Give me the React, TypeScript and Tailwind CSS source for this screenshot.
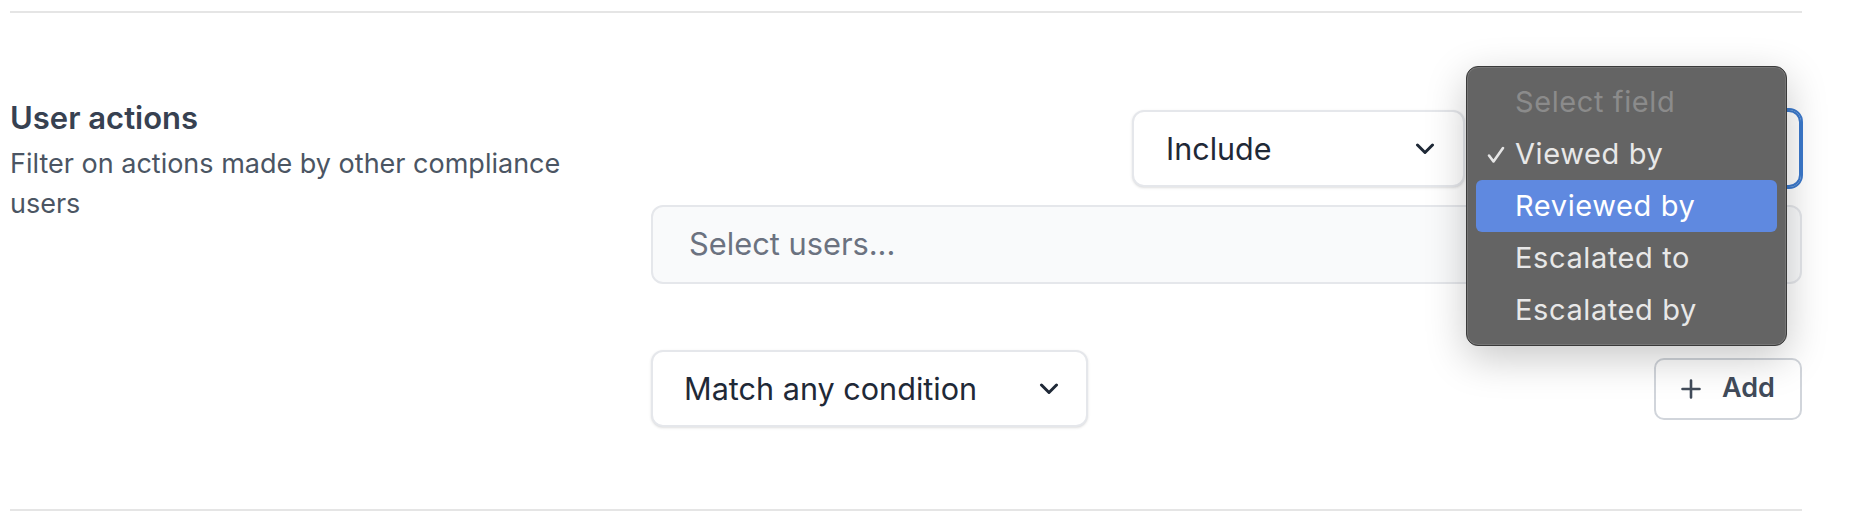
import React from 'react';

function Chevron() {
    return (
        <svg width="20" height="12" viewBox="0 0 20 12" fill="none" className="shrink-0">
            <polyline points="2.5,2 10,9.5 17.5,2" stroke="#1f2937" strokeWidth="3" strokeLinecap="round" strokeLinejoin="round" />
        </svg>
    );
}

function Check() {
    return (
        <svg width="18" height="18" viewBox="0 0 18 18" fill="none">
            <polyline points="2,9.5 6.5,15.5 16,2" stroke="#e6e6e6" strokeWidth="2.6" strokeLinecap="round" strokeLinejoin="round" />
        </svg>
    );
}

const fields = [
    { label: 'Select field', disabled: true },
    { label: 'Viewed by', checked: true },
    { label: 'Reviewed by', active: true },
    { label: 'Escalated to' },
    { label: 'Escalated by' },
];

function FieldMenu() {
    return (
        <div className="absolute left-[-11px] top-[-44px] z-10 w-[321px] rounded-[12px] border border-[#3a3a3a] bg-[#646464] p-[9px] shadow-[inset_0_0_0_1px_rgba(255,255,255,0.12),0_12px_40px_rgba(0,0,0,0.22)]">
            {fields.map((f) => (
                <div
                    key={f.label}
                    className={`relative flex h-[52px] items-center rounded-[6px] pl-[39px] text-[29px] tracking-[0.6px] ${
                        f.active ? 'bg-[#5f89e0] text-white' : f.disabled ? 'text-[#8b8b8b]' : 'text-[#e8e8e8]'
                    }`}
                >
                    {f.checked && (
                        <span className="absolute left-[11px] top-[18px]">
                            <Check />
                        </span>
                    )}
                    {f.label}
                </div>
            ))}
        </div>
    );
}

export default function App() {
    return (
        <div className="min-h-[516px] bg-white font-['Inter',sans-serif]">
            <div className="ml-[10px] w-[1792px] pt-[11px]">
                <div className="flex border-y-2 border-[#e5e5e5] pt-[85px] pb-[82px]">
                    <div className="w-[590px] shrink-0">
                        <h3 className="text-[31px] leading-[40px] font-semibold text-[#374151]">User actions</h3>
                        <p className="mt-[6px] text-[27px] leading-[40px] text-[#4b5563]">
                            Filter on actions made by other compliance users
                        </p>
                    </div>

                    <div className="ml-auto w-[1151px] pt-[12px]">
                        <div className="flex justify-end gap-[12px] pr-[1px]">
                            <div className="flex h-[77px] w-[333px] items-center justify-between rounded-[12px] border-2 border-[#e5e7eb] bg-white pl-[32px] pr-[28px] text-[30.5px] text-[#1f2937] shadow-sm">
                                Include
                                <Chevron />
                            </div>
                            <div className="relative h-[77px] w-[324px]">
                                <div className="flex h-full items-center justify-end rounded-[12px] border-2 border-[#3b79cc] bg-white pr-[28px] outline-[2px] outline-solid outline-[#3b79cc]">
                                    <Chevron />
                                </div>
                                <FieldMenu />
                            </div>
                        </div>

                        <div className="mt-[18px] flex h-[79px] items-center rounded-[12px] border-2 border-[#e5e7eb] bg-[#f9fafb] pl-[36px] text-[30.8px] text-[#6b7280]">
                            Select users...
                        </div>

                        <div className="mt-[66px] flex items-center justify-between">
                            <div className="flex h-[77px] w-[437px] items-center justify-between rounded-[12px] border-2 border-[#e5e7eb] bg-white pl-[31px] pr-[27px] text-[30.6px] text-[#1f2937] shadow-sm">
                                Match any condition
                                <Chevron />
                            </div>
                            <button className="flex h-[62px] w-[148px] items-center justify-center gap-[21px] rounded-[10px] border-2 border-[#d1d5db] bg-white text-[27px] font-semibold text-[#414b5a]">
                                <svg width="20" height="20" viewBox="0 0 20 20" fill="none">
                                    <path d="M10 1.5v17M1.5 10h17" stroke="#414b5a" strokeWidth="2.6" strokeLinecap="round" />
                                </svg>
                                Add
                            </button>
                        </div>
                    </div>
                </div>
            </div>
        </div>
    );
}
